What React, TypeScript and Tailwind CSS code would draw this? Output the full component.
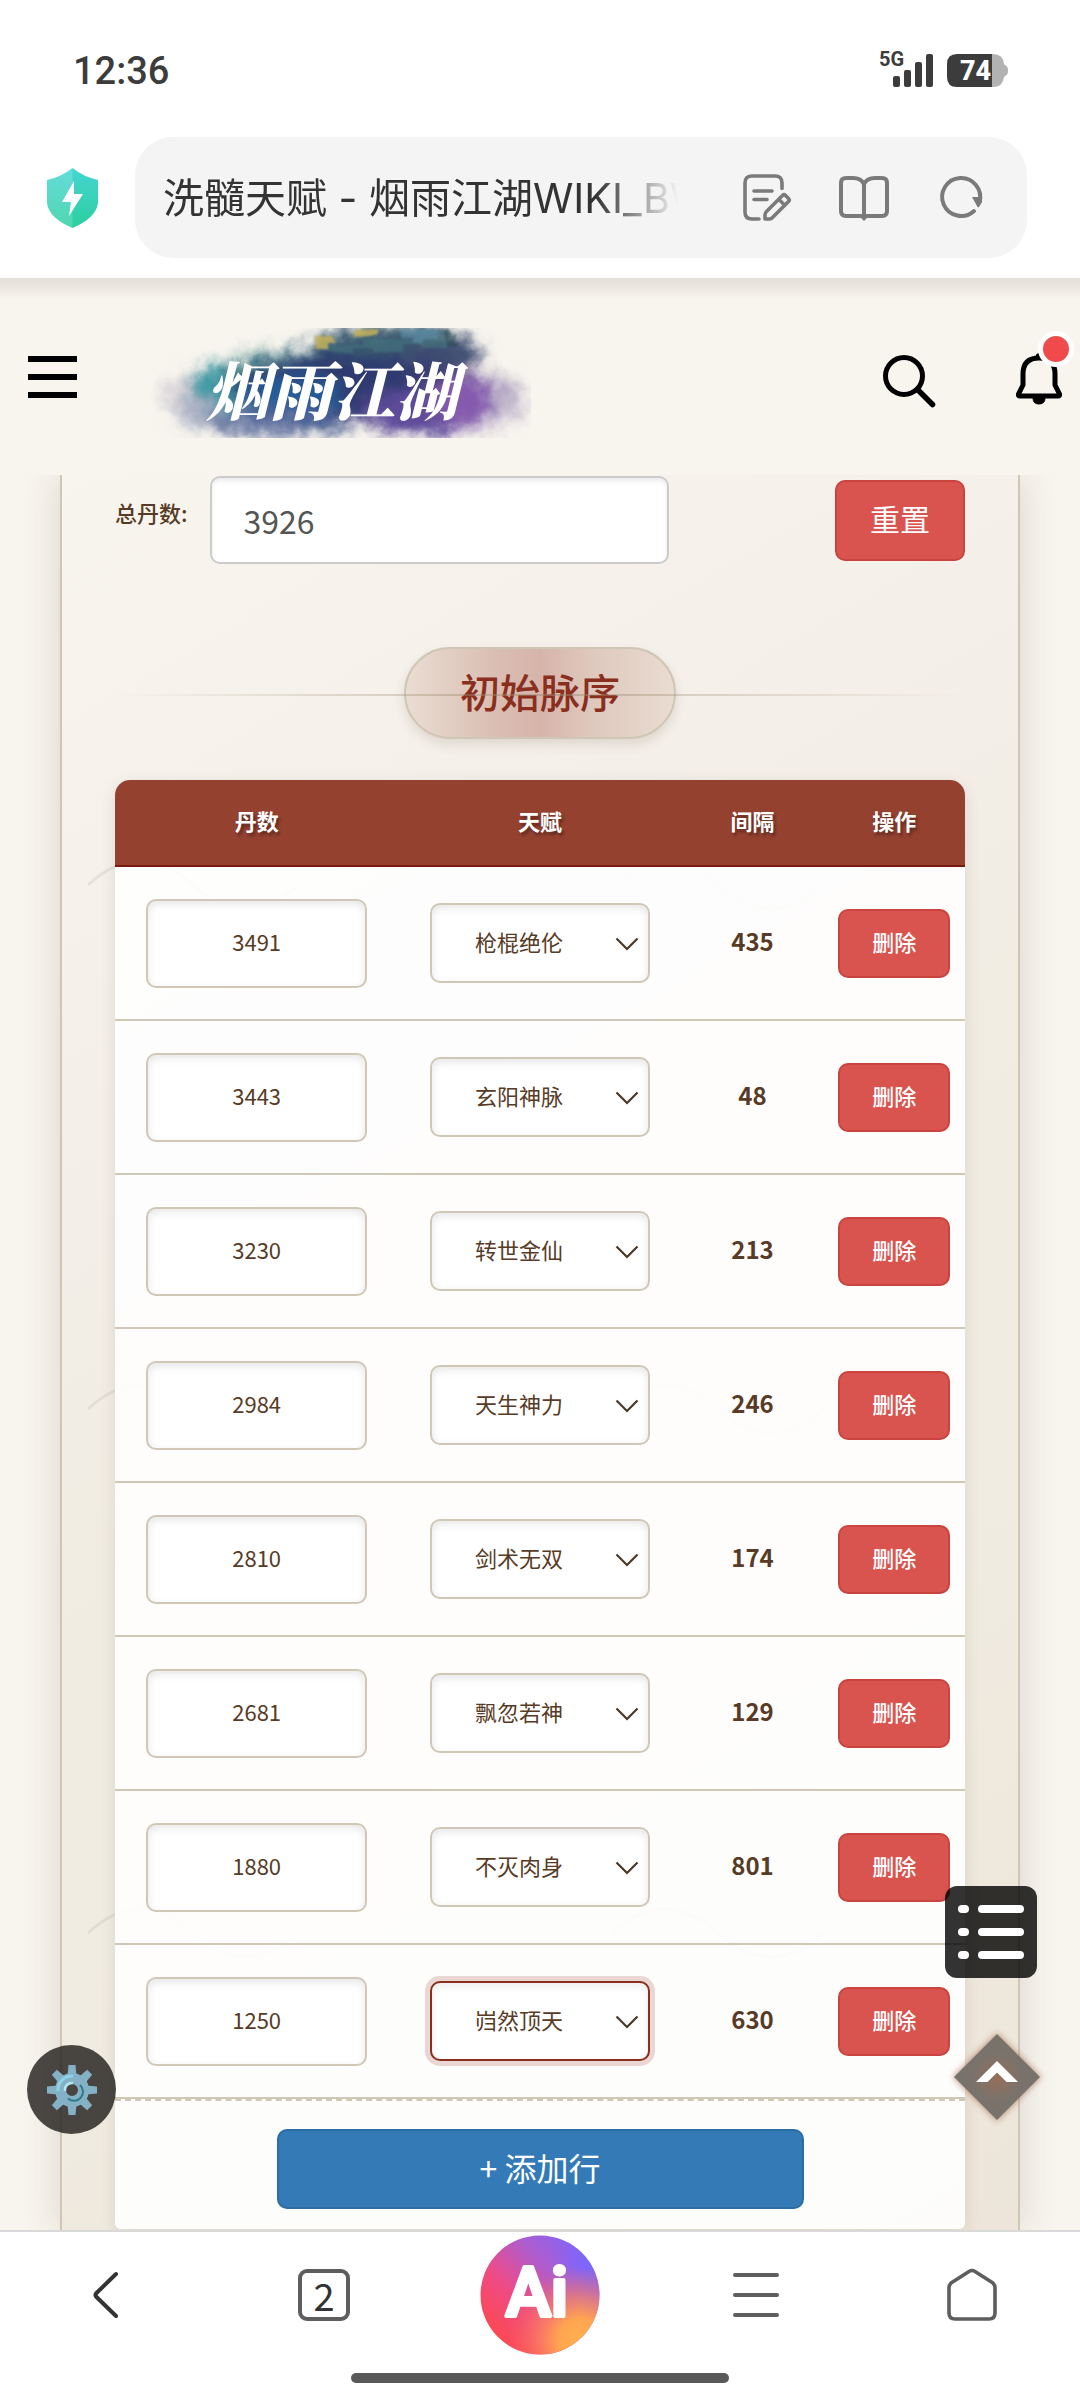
import { useState } from 'react'

type Row = { id: number; pills: number; talent: string }

const TALENTS = ['枪棍绝伦', '玄阳神脉', '转世金仙', '天生神力', '剑术无双', '飘忽若神', '不灭肉身', '岿然顶天']

const INITIAL_ROWS: Row[] = [3491, 3443, 3230, 2984, 2810, 2681, 1880, 1250].map((pills, i) => ({
  id: i + 1,
  pills,
  talent: TALENTS[i],
}))

function StatusBar() {
  return (
    <div className="flex h-[137px] items-center justify-between pl-[73px] pr-[71px] text-[#3c3c3c]">
      <span className="pt-1 font-['Roboto','Noto_Sans_CJK_SC',sans-serif] text-[38px] font-medium leading-none">12:36</span>
      <svg viewBox="0 -10 130 60" className="h-[60px] w-[130px]" role="img" aria-label="5G 74">
        <text x="0" y="17" fontSize="20" fontWeight="700" fill="#3c3c3c" fontFamily="Roboto, sans-serif">5G</text>
        <rect x="14" y="27" width="7" height="11" rx="2" fill="#3c3c3c" />
        <rect x="25" y="21" width="7" height="17" rx="2" fill="#3c3c3c" />
        <rect x="36" y="13" width="7" height="25" rx="2" fill="#3c3c3c" />
        <rect x="47" y="5" width="7" height="33" rx="2" fill="#3c3c3c" />
        <path d="M78 5h36q10 0 11 10l1 1q3 1 3 5.500t-3 5.500l-1 1q-1 10-11 10H78z" fill="#b2b2b2" />
        <path d="M78 5h35v33H78q-10 0-10-10V15q0-10 10-10z" fill="#3c3c3c" />
        <text x="81" y="31" fontSize="27" fontWeight="800" fill="#fff" fontFamily="Roboto, sans-serif">74</text>
      </svg>
    </div>
  )
}

function AddressBar() {
  return (
    <div className="flex items-center gap-[37px] pb-5 pl-[47px] pr-[53px]">
      <svg viewBox="0 0 51 60" className="h-[60px] w-[51px] shrink-0" aria-hidden="true">
        <defs>
          <linearGradient id="shield" x1="0" y1="0" x2="0" y2="1">
            <stop offset="0" stopColor="#45d5d3" />
            <stop offset="1" stopColor="#2bcf9f" />
          </linearGradient>
        </defs>
        <path d="M25.500 0Q37 9 51 12v23Q49 50 25.500 60 2 50 0 35V12Q14 9 25.500 0z" fill="url(#shield)" />
        <path d="M25.500 0Q14 9 0 12v23q2 15 25.500 25z" fill="#fff" opacity=".17" />
        <path d="M27 13 15 34h9l-2 14 14-22h-9z" fill="#fff" />
      </svg>
      <div className="flex h-[121px] min-w-0 flex-1 items-center rounded-[38px] bg-[#f4f4f4] pl-7 pr-[41px]">
        <div className="min-w-0 flex-1 overflow-hidden whitespace-nowrap font-['Inter','Noto_Sans_CJK_SC',sans-serif] text-[41px] leading-[60px] text-[#333] [mask-image:linear-gradient(90deg,#000_84%,transparent_100%)]">
          洗髓天赋 - 烟雨江湖WIKI_BWIKI
        </div>
        <div className="ml-[64px] flex shrink-0 items-center gap-[47px] text-[#7a7a7a]">
          <button type="button" aria-label="编辑">
            <svg viewBox="0 0 50 50" className="size-[50px]" fill="none" stroke="currentColor" strokeWidth="3.600" strokeLinecap="round" strokeLinejoin="round">
              <path d="M40 15.500V10q0-7-7-7H10q-7 0-7 7v29q0 7 7 7h7M12 18h18M12 26.500h13" />
              <path d="m24.500 38.500 16-16q1.500-1.500 3 0l3 3q1.500 1.500 0 3l-16 16q-1 1.500-3 1.500h-4.500v-4q0-2 1.500-3.500zM37 26.500l5 5" />
            </svg>
          </button>
          <button type="button" aria-label="阅读模式">
            <svg viewBox="0 0 50 50" className="size-[50px]" fill="none" stroke="currentColor" strokeWidth="4" strokeLinejoin="round">
              <path d="M25 11Q22 5 14 5H7Q2 5 2 10v28q0 5 5 5h36q5 0 5-5V10q0-5-5-5h-7q-8 0-11 6zM25 11v34" />
              <path d="M21 44h8l-4 4z" fill="currentColor" stroke="none" />
            </svg>
          </button>
          <button type="button" aria-label="刷新">
            <svg viewBox="0 0 50 50" className="size-[50px]" fill="none">
              <path d="M43.500 29A19 19 0 1 0 38 38" stroke="currentColor" strokeWidth="4" strokeLinecap="round" />
              <path d="M36 24h9.500l.5 5-3 5q-1.500 1-2-1z" fill="currentColor" />
            </svg>
          </button>
        </div>
      </div>
    </div>
  )
}

function Logo() {
  return (
    <svg viewBox="0 0 380 110" className="h-[110px] w-[380px]" role="img" aria-label="烟雨江湖">
      <defs>
        <filter id="ink" x="-20%" y="-40%" width="140%" height="180%">
          <feGaussianBlur stdDeviation="8" result="b" />
          <feTurbulence type="fractalNoise" baseFrequency=".06" numOctaves="5" seed="7" result="n" />
          <feDisplacementMap in="b" in2="n" scale="20" xChannelSelector="R" yChannelSelector="G" />
        </filter>
        <filter id="roofs">
          <feGaussianBlur stdDeviation=".9" />
        </filter>
      </defs>
      <g filter="url(#ink)">
        <ellipse cx="192" cy="64" rx="182" ry="36" fill="#b3b0c2" opacity=".5" />
        <ellipse cx="75" cy="84" rx="54" ry="20" fill="#8b94b4" opacity=".6" />
        <ellipse cx="330" cy="76" rx="46" ry="24" fill="#a394bb" opacity=".5" />
        <ellipse cx="84" cy="58" rx="46" ry="22" fill="#3f9aa5" />
        <ellipse cx="140" cy="44" rx="66" ry="20" fill="#427f85" />
        <ellipse cx="242" cy="24" rx="86" ry="26" fill="#3b5a70" />
        <ellipse cx="205" cy="60" rx="126" ry="34" fill="#2e3a70" />
        <ellipse cx="140" cy="70" rx="50" ry="22" fill="#275b98" />
        <ellipse cx="270" cy="84" rx="60" ry="24" fill="#5d4b9a" />
        <ellipse cx="312" cy="72" rx="30" ry="26" fill="#855aae" />
        <ellipse cx="130" cy="94" rx="76" ry="14" fill="#4f6296" opacity=".8" />
        <ellipse cx="290" cy="28" rx="40" ry="22" fill="#444a73" opacity=".6" />
      </g>
      <g filter="url(#roofs)">
        <path d="M170 22v-5h42v-6h54V2h30v18h-26v-4h-18v8h-30v-4h-20v6z" fill="#44707c" opacity=".7" />
        <path d="M164 8h17l4 7h-8v6h-12zM203 2l24-1v5l-8 2-16 1z" fill="#c3b15b" opacity=".85" />
        <path d="M250 1h36v10h-14v4h-10v-5h-12z" fill="#5b91a8" opacity=".6" />
        <path d="M293 2l5-1 3 6 5-1-2 8 5 4-13 1z" fill="#2a4a54" opacity=".6" />
      </g>
      <text
        x="181"
        y="87"
        textAnchor="middle"
        fontSize="63"
        fontWeight="900"
        fontStyle="italic"
        fill="#fff"
        fontFamily="'Noto Serif CJK SC', 'Noto Sans CJK SC', serif"
      >
        烟雨江湖
      </text>
    </svg>
  )
}

function SiteHeader() {
  return (
    <header className="relative z-10 flex h-[197px] items-center justify-between bg-[#f8f5ee] bg-[linear-gradient(180deg,#e3e0d9_0,#ece8e0_10px,#f8f5ee_21px)] pl-7 pr-[18px]">
      <div className="flex items-center gap-[74px]">
        <button type="button" aria-label="菜单" className="flex w-[49px] flex-col gap-3">
          <span className="h-[6px] bg-black" />
          <span className="h-[6px] bg-black" />
          <span className="h-[6px] bg-black" />
        </button>
        <a href="#" className="mt-3">
          <Logo />
        </a>
      </div>
      <div className="flex items-center gap-[80px]">
        <button type="button" aria-label="搜索">
          <svg viewBox="0 0 54 54" className="mt-2 size-[54px]" fill="none" stroke="#000" strokeWidth="5" strokeLinecap="round">
            <circle cx="22" cy="22" r="18.500" />
            <path d="m36 36 14.500 14.500" strokeWidth="5.500" />
          </svg>
        </button>
        <button type="button" aria-label="通知" className="relative mt-1">
          <svg viewBox="0 0 46 56" className="h-[56px] w-[46px]" fill="none" stroke="#000" strokeWidth="5" strokeLinejoin="round">
            <path d="M7 34V23Q7 7 23 7t16 16v11l4.500 9q.5 2-1.500 2H4q-2 0-1.500-2z" />
            <path d="M20 6q0-3.500 3-3.500T26 6M17 47q0 6 6 6t6-6z" fill="#000" strokeWidth="1" />
          </svg>
          <span className="absolute -right-[12px] -top-[20px] size-9 rounded-full border-[5px] border-white bg-[#f04b4a]" />
        </button>
      </div>
    </header>
  )
}

// faint brush waves behind the card content
function Waves() {
  return (
    <svg className="pointer-events-none absolute inset-0 h-full w-full" aria-hidden="true">
      <defs>
        <pattern id="waves" x="26" y="360" width="525" height="524" patternUnits="userSpaceOnUse">
          <path d="M0 50Q52 2 105 50T210 50" fill="none" stroke="#8b8678" strokeOpacity=".15" strokeWidth="3" />
        </pattern>
      </defs>
      <rect width="100%" height="100%" fill="url(#waves)" />
    </svg>
  )
}

function SectionTitle({ children }: { children: string }) {
  return (
    <div className="relative mt-[83px] flex justify-center">
      <h2 className="rounded-full border-2 border-[#d0c6b5] bg-[linear-gradient(90deg,#e9ddd2_0%,#dbbfb4_32%,#d6b4aa_50%,#dfc9be_70%,#e9dcd1_100%)] px-[54px] pb-4 pt-3 text-[40px] font-medium leading-[60px] text-[#8a2e1e] shadow-[0_6px_12px_rgba(90,70,50,0.14)]">
        {children}
      </h2>
      <span className="absolute left-0 right-0 top-[47px] h-[2px] bg-[linear-gradient(90deg,transparent,rgba(160,140,115,0.5)_50%,transparent)]" />
    </div>
  )
}

function BottomNav() {
  return (
    <nav className="relative z-20 border-t-2 border-[#d9d9d9] bg-white pb-[17px]">
      <div className="grid h-[126px] grid-cols-5 place-items-center">
        <button type="button" aria-label="返回">
          <svg viewBox="0 0 50 50" className="size-[50px]" fill="none" stroke="#333" strokeWidth="4" strokeLinecap="round" strokeLinejoin="round">
            <path d="M33 4 13.500 23q-2 2 0 4L33 46" />
          </svg>
        </button>
        <button type="button" aria-label="标签页" className="size-[52px] rounded-[9px] border-4 border-[#5e5e5e] font-['Noto_Sans_CJK_SC',sans-serif] text-[38px] leading-10 text-[#333]">
          2
        </button>
        <button type="button" aria-label="Ai">
          <svg viewBox="0 0 120 120" className="size-[120px]">
            <defs>
              <linearGradient id="aiBase" x1="0" y1=".8" x2=".85" y2="0">
                <stop offset="0" stopColor="#ff4848" />
                <stop offset=".35" stopColor="#ee4b86" />
                <stop offset=".65" stopColor="#b05ccc" />
                <stop offset="1" stopColor="#7a67ff" />
              </linearGradient>
              <radialGradient id="aiGlow" cx=".84" cy=".88" r=".62">
                <stop offset="0" stopColor="#ffb04e" />
                <stop offset=".3" stopColor="#ffa451" />
                <stop offset="1" stopColor="#ff6a5a" stopOpacity="0" />
              </radialGradient>
              <radialGradient id="aiViolet" cx=".9" cy=".24" r=".3">
                <stop offset="0" stopColor="#7a67ff" />
                <stop offset="1" stopColor="#8a62f0" stopOpacity="0" />
              </radialGradient>
            </defs>
            <circle cx="60" cy="60" r="59.500" fill="url(#aiBase)" />
            <circle cx="60" cy="60" r="59.500" fill="url(#aiViolet)" />
            <circle cx="60" cy="60" r="59.500" fill="url(#aiGlow)" />
            <text x="57" y="81" textAnchor="middle" fontSize="68" fontWeight="500" fill="#fff" stroke="#fff" strokeWidth="4" strokeLinejoin="round" fontFamily="Roboto, sans-serif">
              Ai
            </text>
          </svg>
        </button>
        <button type="button" aria-label="更多" className="flex w-[46px] flex-col gap-4">
          <span className="h-1 rounded-sm bg-[#5e5e5e]" />
          <span className="h-1 rounded-sm bg-[#5e5e5e]" />
          <span className="h-1 rounded-sm bg-[#5e5e5e]" />
        </button>
        <button type="button" aria-label="主页">
          <svg viewBox="0 0 52 54" className="h-[54px] w-[52px]" fill="none" stroke="#5e5e5e" strokeWidth="3.600" strokeLinejoin="round">
            <path d="M23 3.500 5 15q-2 2-2 5v25q0 6 6 6h34q6 0 6-6V20q0-3-2-5L29 3.500q-3-2-6 0z" />
          </svg>
        </button>
      </div>
      <div className="mx-auto mt-[15px] h-[10px] w-[35%] rounded-full bg-[#595959]" />
    </nav>
  )
}

function FloatingButtons() {
  return (
    <>
      <button type="button" aria-label="目录" className="fixed bottom-[422px] right-[43px] z-10 flex size-[92px] flex-col justify-center gap-[15px] rounded-xl bg-black/80 px-[13px]">
        {[0, 1, 2].map((i) => (
          <span key={i} className="flex gap-[9px]">
            <span className="h-2 w-[11px] rounded-full bg-white" />
            <span className="h-2 flex-1 rounded-full bg-white" />
          </span>
        ))}
      </button>

      <button type="button" aria-label="返回顶部" className="fixed bottom-[273px] right-[33px] z-10">
        <svg viewBox="0 0 100 100" className="size-[100px]">
          <defs>
            <radialGradient id="topFill">
              <stop offset="0" stopColor="#936c56" />
              <stop offset=".55" stopColor="#76706a" />
              <stop offset="1" stopColor="#716f69" />
            </radialGradient>
            <filter id="topGlow" x="-20%" y="-20%" width="140%" height="140%">
              <feGaussianBlur stdDeviation="3" />
            </filter>
          </defs>
          <path d="m50 6 44 44-44 44L6 50z" fill="#a86e51" opacity=".7" filter="url(#topGlow)" />
          <path d="m50 7 43 43-43 43L7 50z" fill="url(#topFill)" opacity=".95" />
          <path d="m50 34 21 21H59.500L50 45.500 40.500 55H29z" fill="#fff" />
        </svg>
      </button>

      <button type="button" aria-label="设置" className="fixed bottom-[266px] left-[27px] z-10 flex size-[89px] items-center justify-center rounded-full bg-[#1e1c19]/80">
        <svg viewBox="-26 -26 52 52" className="size-[52px]">
          {[0, 45, 90, 135, 180, 225, 270, 315].map((a) => (
            <path key={a} d="M-4.500-14-3.500-25h7L4.500-14z" fill="#84b1c5" transform={`rotate(${a})`} />
          ))}
          <circle r="11.500" fill="none" stroke="#84b1c5" strokeWidth="11" />
          <path d="M-14 1A14 14 0 0 1 1-14" fill="none" stroke="#8ed3e8" strokeWidth="3" />
          <path d="M-7 1A7 7 0 0 1 1-7" fill="none" stroke="#b3e7ef" strokeWidth="2.500" />
          <path d="M8-5A9 9 0 0 1-4 8.500" fill="none" stroke="#2c7c8c" strokeWidth="2" />
        </svg>
      </button>
    </>
  )
}

export default function App() {
  const [total, setTotal] = useState(3926)
  const [rows, setRows] = useState<Row[]>(INITIAL_ROWS)
  const [activeId, setActiveId] = useState(8)

  function updateRow(id: number, patch: Partial<Row>) {
    setRows(rows.map((r) => (r.id === id ? { ...r, ...patch } : r)))
  }

  function addRow() {
    setRows([...rows, { id: Date.now(), pills: 0, talent: TALENTS[0] }])
  }

  return (
    <div className="flex min-h-screen flex-col bg-[#f8f5ee] font-['Noto_Sans_CJK_SC',sans-serif] text-[#573b26]">
      <div className="bg-white">
        <StatusBar />
        <AddressBar />
      </div>
      <SiteHeader />

      <main className="flex flex-1 flex-col overflow-hidden px-[60px]">
        <div className="relative flex-1 border-x-2 border-[#d0c6b5] bg-[linear-gradient(150deg,#f8f5ee_0%,#f4efe9_28%,#f0ece1_50%,#f0ece1_65%,#ede5d9_100%)] px-[53px] pt-px shadow-[0_0_36px_rgba(60,50,35,0.16)]">
          <Waves />
          <div className="relative">
            <div className="flex items-center">
              <label htmlFor="total" className="mr-[22px] pb-4 text-[22px] font-medium leading-8">总丹数:</label>
              <input
                id="total"
                inputMode="numeric"
                value={total}
                onChange={(e) => setTotal(Number(e.target.value) || 0)}
                className="h-[88px] w-[54%] rounded-[10px] border-2 border-[#ccc] bg-white px-8 text-[32px] text-[#555] shadow-[inset_0_3px_4px_rgba(0,0,0,0.08)] outline-none"
              />
              <button
                type="button"
                onClick={() => setRows(INITIAL_ROWS)}
                className="ml-auto h-[81px] rounded-[10px] border-2 border-[#c9433f] bg-[#d9534f] px-[33px] pb-1 text-[30px] text-white"
              >
                重置
              </button>
            </div>

            <SectionTitle>初始脉序</SectionTitle>

            <div className="mt-[41px] overflow-hidden rounded-t-[15px] rounded-b-md bg-white/90 shadow-[0_4px_16px_rgba(80,60,40,0.12)]">
              <table className="w-full table-fixed border-collapse text-center">
                <thead>
                  <tr className="h-[86px] border-b-2 border-[#7b1810] bg-[#944130] text-[22px] text-white [text-shadow:2px_3px_3px_rgba(0,0,0,0.35)]">
                    <th className="w-1/3 pb-1">丹数</th>
                    <th className="w-1/3 pb-1">天赋</th>
                    <th className="w-1/6 pb-1">间隔</th>
                    <th className="w-1/6 pb-1">操作</th>
                  </tr>
                </thead>
                <tbody>
                  {rows.map((row, i) => (
                    <tr key={row.id} className="h-[154px] border-b-2 border-[#d0c7b6]">
                      <td>
                        <input
                          aria-label="丹数"
                          inputMode="numeric"
                          value={row.pills}
                          onChange={(e) => updateRow(row.id, { pills: Number(e.target.value) || 0 })}
                          className="h-[89px] w-[78%] rounded-[10px] border-2 border-[#d0c7b6] bg-white pb-1 text-center align-middle text-[22px] shadow-[inset_0_3px_8px_rgba(0,0,0,0.1)] outline-none"
                        />
                      </td>
                      <td>
                        <div className="relative mx-auto w-[78%]">
                          <select
                            aria-label="天赋"
                            value={row.talent}
                            onFocus={() => setActiveId(row.id)}
                            onChange={(e) => updateRow(row.id, { talent: e.target.value })}
                            className={`block h-20 w-full appearance-none rounded-[10px] border-2 bg-white pb-1 pr-[42px] text-center text-[22px] outline-none [text-align-last:center] ${
                              row.id === activeId
                                ? 'border-[#8a2e1e] shadow-[0_0_0_5px_#ead6d2,inset_0_3px_8px_rgba(0,0,0,0.08)]'
                                : 'border-[#d0c7b6] shadow-[inset_0_3px_8px_rgba(0,0,0,0.1)]'
                            }`}
                          >
                            {TALENTS.map((t) => (
                              <option key={t}>{t}</option>
                            ))}
                          </select>
                          <svg viewBox="0 0 24 14" className="pointer-events-none absolute right-[11px] top-[34px] h-[14px] w-6" fill="none" stroke="#4b3725" strokeWidth="2.200">
                            <path d="m1.500 1.500 10.500 10.500L22.500 1.500" />
                          </svg>
                        </div>
                      </td>
                      <td className="pb-1 text-[24px] font-bold">{(i === 0 ? total : rows[i - 1].pills) - row.pills}</td>
                      <td>
                        <button
                          type="button"
                          onClick={() => setRows(rows.filter((r) => r.id !== row.id))}
                          className="h-[69px] rounded-[10px] border-2 border-[#c9433f] bg-[#d9534f] px-8 pb-1 align-middle text-[22px] font-medium text-white"
                        >
                          删除
                        </button>
                      </td>
                    </tr>
                  ))}
                </tbody>
              </table>
              <div className="border-t-2 border-dashed border-[#d0c7b6] pb-5 pt-7 text-center">
                <button
                  type="button"
                  onClick={addRow}
                  className="h-20 w-[62%] rounded-[10px] border-2 border-[#2e6da4] bg-[#337ab7] pb-1 align-middle text-[32px] text-white"
                >
                  + 添加行
                </button>
              </div>
            </div>
          </div>
        </div>
      </main>

      <FloatingButtons />
      <BottomNav />
    </div>
  )
}
